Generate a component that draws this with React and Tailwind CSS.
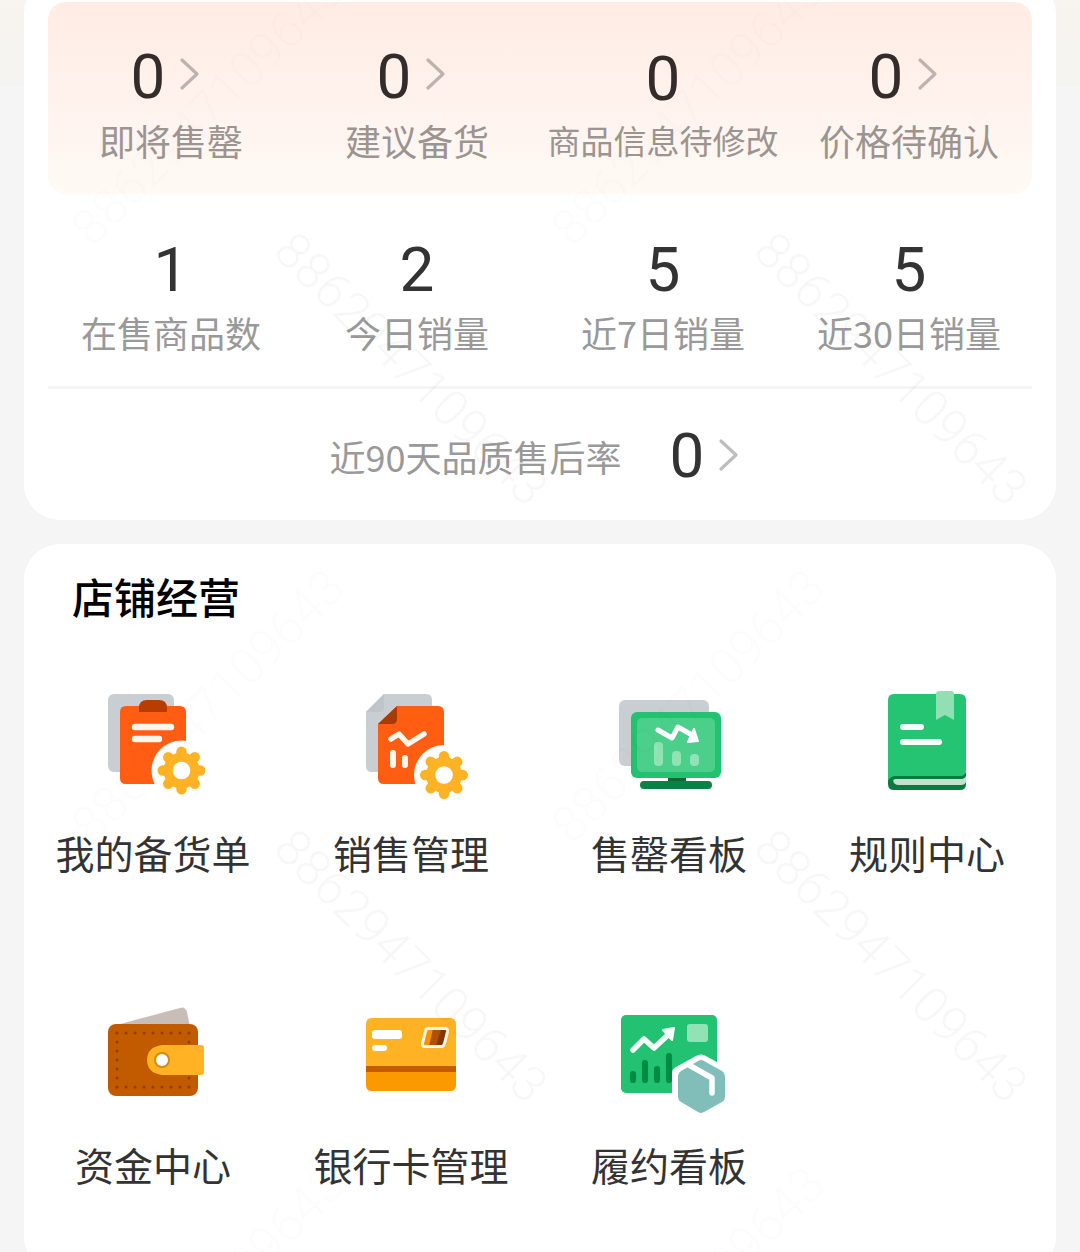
import React from 'react';

const WATERMARK = '8862947109643';

const todoStats = [
  { label: '即将售罄', value: 0, link: true },
  { label: '建议备货', value: 0, link: true },
  { label: '商品信息待修改', value: 0, link: false, small: true },
  { label: '价格待确认', value: 0, link: true },
];

const salesStats = [
  { label: '在售商品数', value: 1 },
  { label: '今日销量', value: 2 },
  { label: '近7日销量', value: 5 },
  { label: '近30日销量', value: 5 },
];

const Chevron = () => (
  <svg className="ml-3 h-9 w-[34px]" viewBox="0 0 34 36" fill="none" stroke="#000" strokeOpacity="0.26" strokeWidth="3.2" strokeLinecap="round" strokeLinejoin="round">
    <path d="M5 4l15 14L5 32" />
  </svg>
);

const Gear = ({ cx, cy }) => (
  <g>
    <circle cx={cx} cy={cy} r="30" fill="#fff" />
    <g stroke="#ffb224" strokeWidth="10.4" strokeLinecap="round">
      {[0, 45, 90, 135].map((angle) => (
        <path key={angle} d={`M${cx} ${cy - 18.8}V${cy + 18.8}`} transform={`rotate(${angle} ${cx} ${cy})`} />
      ))}
    </g>
    <circle cx={cx} cy={cy} r="18" fill="#ffb224" />
    <circle cx={cx} cy={cy} r="8.8" fill="#fff" />
  </g>
);

const StockListIcon = () => (
  <svg className="size-[130px]" viewBox="-2 0 130 130">
    <rect x="18" y="19" width="66" height="78" rx="6" fill="#c9ced3" />
    <path d="M36 31h54q6 0 6 6v29q-30 0-34 30 0 7 3 13H36q-6 0-6-6V37q0-6 6-6z" fill="#ff5e12" />
    <path d="M49 37v-4q0-8 8-8h12q8 0 8 8v4z" fill="#b93d00" />
    <path d="M45 52h36M45 64h24" stroke="#fff7ec" strokeWidth="6.4" strokeLinecap="round" />
    <Gear cx={91.5} cy={95.5} />
  </svg>
);

const SalesIcon = () => (
  <svg className="size-[130px]" viewBox="-4 0 130 130">
    <path d="M34 19h42q6 0 6 6v72H22q-6 0-6-6V37z" fill="#c9ced3" />
    <path d="M34 19v13q0 5-5 5H16z" fill="#bfc5ca" />
    <path d="M47 31h41q6 0 6 6v72H34q-6 0-6-6V49z" fill="#ff5e12" />
    <path d="M47 31v13q0 5-5 5H28z" fill="#a83a05" />
    <path d="M41 64l8-5 9 10 16-10" fill="none" stroke="#fff7ec" strokeWidth="5.5" strokeLinecap="round" strokeLinejoin="round" />
    <path d="M43 78v12M55 83v7" stroke="#fff7ec" strokeWidth="6" strokeLinecap="round" />
    <Gear cx={94} cy={100} />
  </svg>
);

const SoldOutIcon = () => (
  <svg className="size-[130px]" viewBox="-1 0 130 130">
    <rect x="14" y="25" width="90" height="66" rx="6" fill="#c9ced3" />
    <path d="M63 102h18v6H63z" fill="#0b6b35" />
    <rect x="35" y="106" width="72" height="8" rx="4" fill="#0b8245" />
    <rect x="26" y="37" width="90" height="66" rx="6" fill="#23c272" />
    <rect x="32" y="43" width="78" height="54" rx="5" fill="#4bcf8b" />
    <rect x="49" y="67" width="9" height="24" rx="4" fill="#91e2b5" />
    <rect x="67" y="76" width="9" height="15" rx="4" fill="#91e2b5" />
    <rect x="85" y="79" width="9" height="12" rx="4" fill="#91e2b5" />
    <path d="M53 55l14 8 6-11 14 8" fill="none" stroke="#fff" strokeWidth="5" strokeLinecap="round" strokeLinejoin="round" />
    <path d="M89 54l4 12-10 1z" fill="#fff" stroke="#fff" strokeWidth="2" strokeLinejoin="round" />
  </svg>
);

const RulesIcon = () => (
  <svg className="size-[130px]" viewBox="-8 0 130 130">
    <path d="M18 98h78v11q0 6-6 6H24q-6 0-6-6z" fill="#0b7a40" />
    <path d="M23 104h67q4 0 6-3v6q-1 3-5 3H29q-6 0-6-6z" fill="#c2dfd0" />
    <path d="M24 19h66q6 0 6 6v70q0 6-6 6H26q-6 0-8 5V25q0-6 6-6z" fill="#25c472" />
    <path d="M20 107q0-5 6-5h64q5 0 6-5v2q0 5-6 5H26q-4 0-3 4" fill="#0b7a40" />
    <path d="M69 16h12q3 0 3 3v26l-9-5-9 5V19q0-3 3-3z" fill="#91dfb2" />
    <path d="M33 52h18M33 67h36" stroke="#f5fff9" strokeWidth="6" strokeLinecap="round" />
  </svg>
);

const WalletIcon = () => (
  <svg className="size-[130px]" viewBox="-2 -3 130 130">
    <path d="M30 34l60-16q5-2 7 4l4 20z" fill="#c9bdb8" />
    <rect x="18" y="34" width="90" height="72" rx="8" transform="translate(0 0)" fill="#c25a00" />
    <rect x="27" y="43" width="72" height="54" fill="none" stroke="#8f4000" strokeWidth="3" strokeLinecap="round" strokeDasharray="0.1 8.900" />
    <path d="M72 55h39q3 0 3 3v24q0 3-3 3H72q-15-2-15-15t15-15z" fill="#ffb224" />
    <circle cx="72" cy="70" r="8" fill="#d68a0f" />
    <circle cx="72" cy="70" r="6" fill="#fff" />
  </svg>
);

const BankCardIcon = () => (
  <svg className="size-[130px]" viewBox="-4 -3 130 130">
    <path d="M16 76h90v19q0 6-6 6H22q-6 0-6-6z" fill="#fa9a00" />
    <path d="M22 28h78q6 0 6 6v42H16V34q0-6 6-6z" fill="#ffb224" />
    <path d="M16 76h90v6H16z" fill="#c25c00" />
    <rect x="22" y="40" width="30" height="9" rx="3" fill="#fff" />
    <rect x="22" y="55" width="15" height="6" rx="3" fill="#fff" />
    <path d="M77 39h20l-4 17H73z" fill="#b15000" />
    <path d="M77 39h6l-4 17h-6z" fill="#f59300" />
    <path d="M91 39h6l-4 17h-7z" fill="#843500" />
    <path d="M78 38.500h17q3 0 2.500 3l-3 12q-1 3-3 3H75q-3 0-2.500-3l3-12q.5-3 2.500-3z" fill="none" stroke="#fff8e6" strokeWidth="3" />
  </svg>
);

const FulfillIcon = () => (
  <svg className="size-[130px]" viewBox="-1 -3 130 130">
    <rect x="16" y="25" width="96" height="78" rx="5" fill="#23c272" />
    <rect x="82" y="34" width="21" height="18" rx="3" fill="#91e2b5" />
    <path d="M28 84v6M40 73v17M52 79v11M64 66v24" stroke="#008c43" strokeWidth="6.200" strokeLinecap="round" />
    <path d="M28 60l11-11 10 9 15-14" fill="none" stroke="#f5fff9" strokeWidth="5.500" strokeLinecap="round" strokeLinejoin="round" />
    <path d="M58 40l11-2-2 12z" fill="#f5fff9" stroke="#f5fff9" strokeWidth="2" strokeLinejoin="round" />
    <path d="M67 106V83q0-4 4-6l20-11q5-3 10 0l16 9v33z" fill="#fff" />
    <path d="M93 71q3-2 6 0l18 10q3 2 3 5v21q0 3-3 5l-18 10q-3 2-6 0l-17-10q-3-2-3-5V86q0-3 3-5z" fill="#82beb9" />
    <path d="M84 75l23 13v15" fill="none" stroke="#fff" strokeWidth="5.500" strokeLinecap="round" strokeLinejoin="round" />
  </svg>
);

const menuItems = [
  { label: '我的备货单', Icon: StockListIcon },
  { label: '销售管理', Icon: SalesIcon },
  { label: '售罄看板', Icon: SoldOutIcon },
  { label: '规则中心', Icon: RulesIcon },
  { label: '资金中心', Icon: WalletIcon },
  { label: '银行卡管理', Icon: BankCardIcon },
  { label: '履约看板', Icon: FulfillIcon },
];

const Watermark = () => (
  <div aria-hidden="true" className="pointer-events-none absolute inset-0 overflow-hidden">
    <div className="grid grid-cols-[repeat(auto-fill,480px)] font-['Roboto'] text-[50px] leading-none font-light">
      {Array.from({ length: 6 }, (_, i) => (
        <div key={i} className="relative h-[597px]">
          <span className="absolute top-[84px] left-[26px] w-[364px] -rotate-45 text-center text-black/1">{WATERMARK}</span>
          <span className="absolute top-[344px] left-[229px] w-[364px] rotate-45 text-center text-black/3">{WATERMARK}</span>
        </div>
      ))}
    </div>
  </div>
);

const App = () => {
  return (
    <div className="relative h-screen overflow-hidden bg-[#f5f5f5] px-6 font-['Noto_Sans_CJK_SC',sans-serif]">
      <div className="absolute inset-x-0 top-0 h-[84px] bg-linear-to-b from-[#f8f4ef] to-[#f4f4f1]"></div>

      <section className="relative -mt-[22px] rounded-[36px] bg-white px-6 pt-6">
        <div className="grid h-48 grid-cols-4 rounded-[18px] bg-linear-to-b from-[#ffece4] via-[#fff2ed] to-[#fffaf5]">
          {todoStats.map((item) => (
            <button key={item.label} type="button" className="flex flex-col items-center pt-10 whitespace-nowrap">
              <span className={item.link ? 'flex h-16 items-center' : 'flex h-16 items-center pt-1'}>
                <span className="pt-1.5 font-['Roboto'] text-[62px] leading-[64px] text-[#332c2a]">{item.value}</span>
                {item.link && <Chevron />}
              </span>
              <span className={item.small ? 'mt-1.5 text-[33px] leading-[56px] text-[#9b9491]' : 'mt-1.5 text-[36px] leading-[56px] text-[#9b9491]'}>
                {item.label}
              </span>
            </button>
          ))}
        </div>

        <div className="grid grid-cols-4 border-b-3 border-[#f5f5f5] pt-11 pb-6">
          {salesStats.map((item) => (
            <div key={item.label} className="flex flex-col items-center whitespace-nowrap">
              <span className="font-['Roboto'] text-[62px] leading-[64px] text-[#333]">{item.value}</span>
              <span className="mt-0.5 mb-0.5 text-[36px] leading-[56px] text-[#999]">{item.label}</span>
            </div>
          ))}
        </div>

        <button type="button" className="flex h-[131px] w-full items-center justify-center whitespace-nowrap">
          <span className="pt-0.5 text-[36px] leading-[56px] text-[#999]">近90天品质售后率</span>
          <span className="ml-12 pt-0.5 font-['Roboto'] text-[62px] leading-[64px] text-[#333]">0</span>
          <Chevron />
        </button>
      </section>

      <section className="relative mt-6 rounded-[36px] bg-white">
        <h2 className="px-12 pt-6 text-[42px] leading-[56px] font-medium text-black">店铺经营</h2>
        <div className="grid grid-cols-4 gap-y-[107px] pt-[51px] pb-20">
          {menuItems.map(({ label, Icon }) => (
            <button key={label} type="button" className="flex flex-col items-center whitespace-nowrap text-[#333]">
              <Icon />
              <span className="mt-[19px] text-[39px] leading-[56px]">{label}</span>
            </button>
          ))}
        </div>
      </section>

      <Watermark />
    </div>
  );
};

export default App;
